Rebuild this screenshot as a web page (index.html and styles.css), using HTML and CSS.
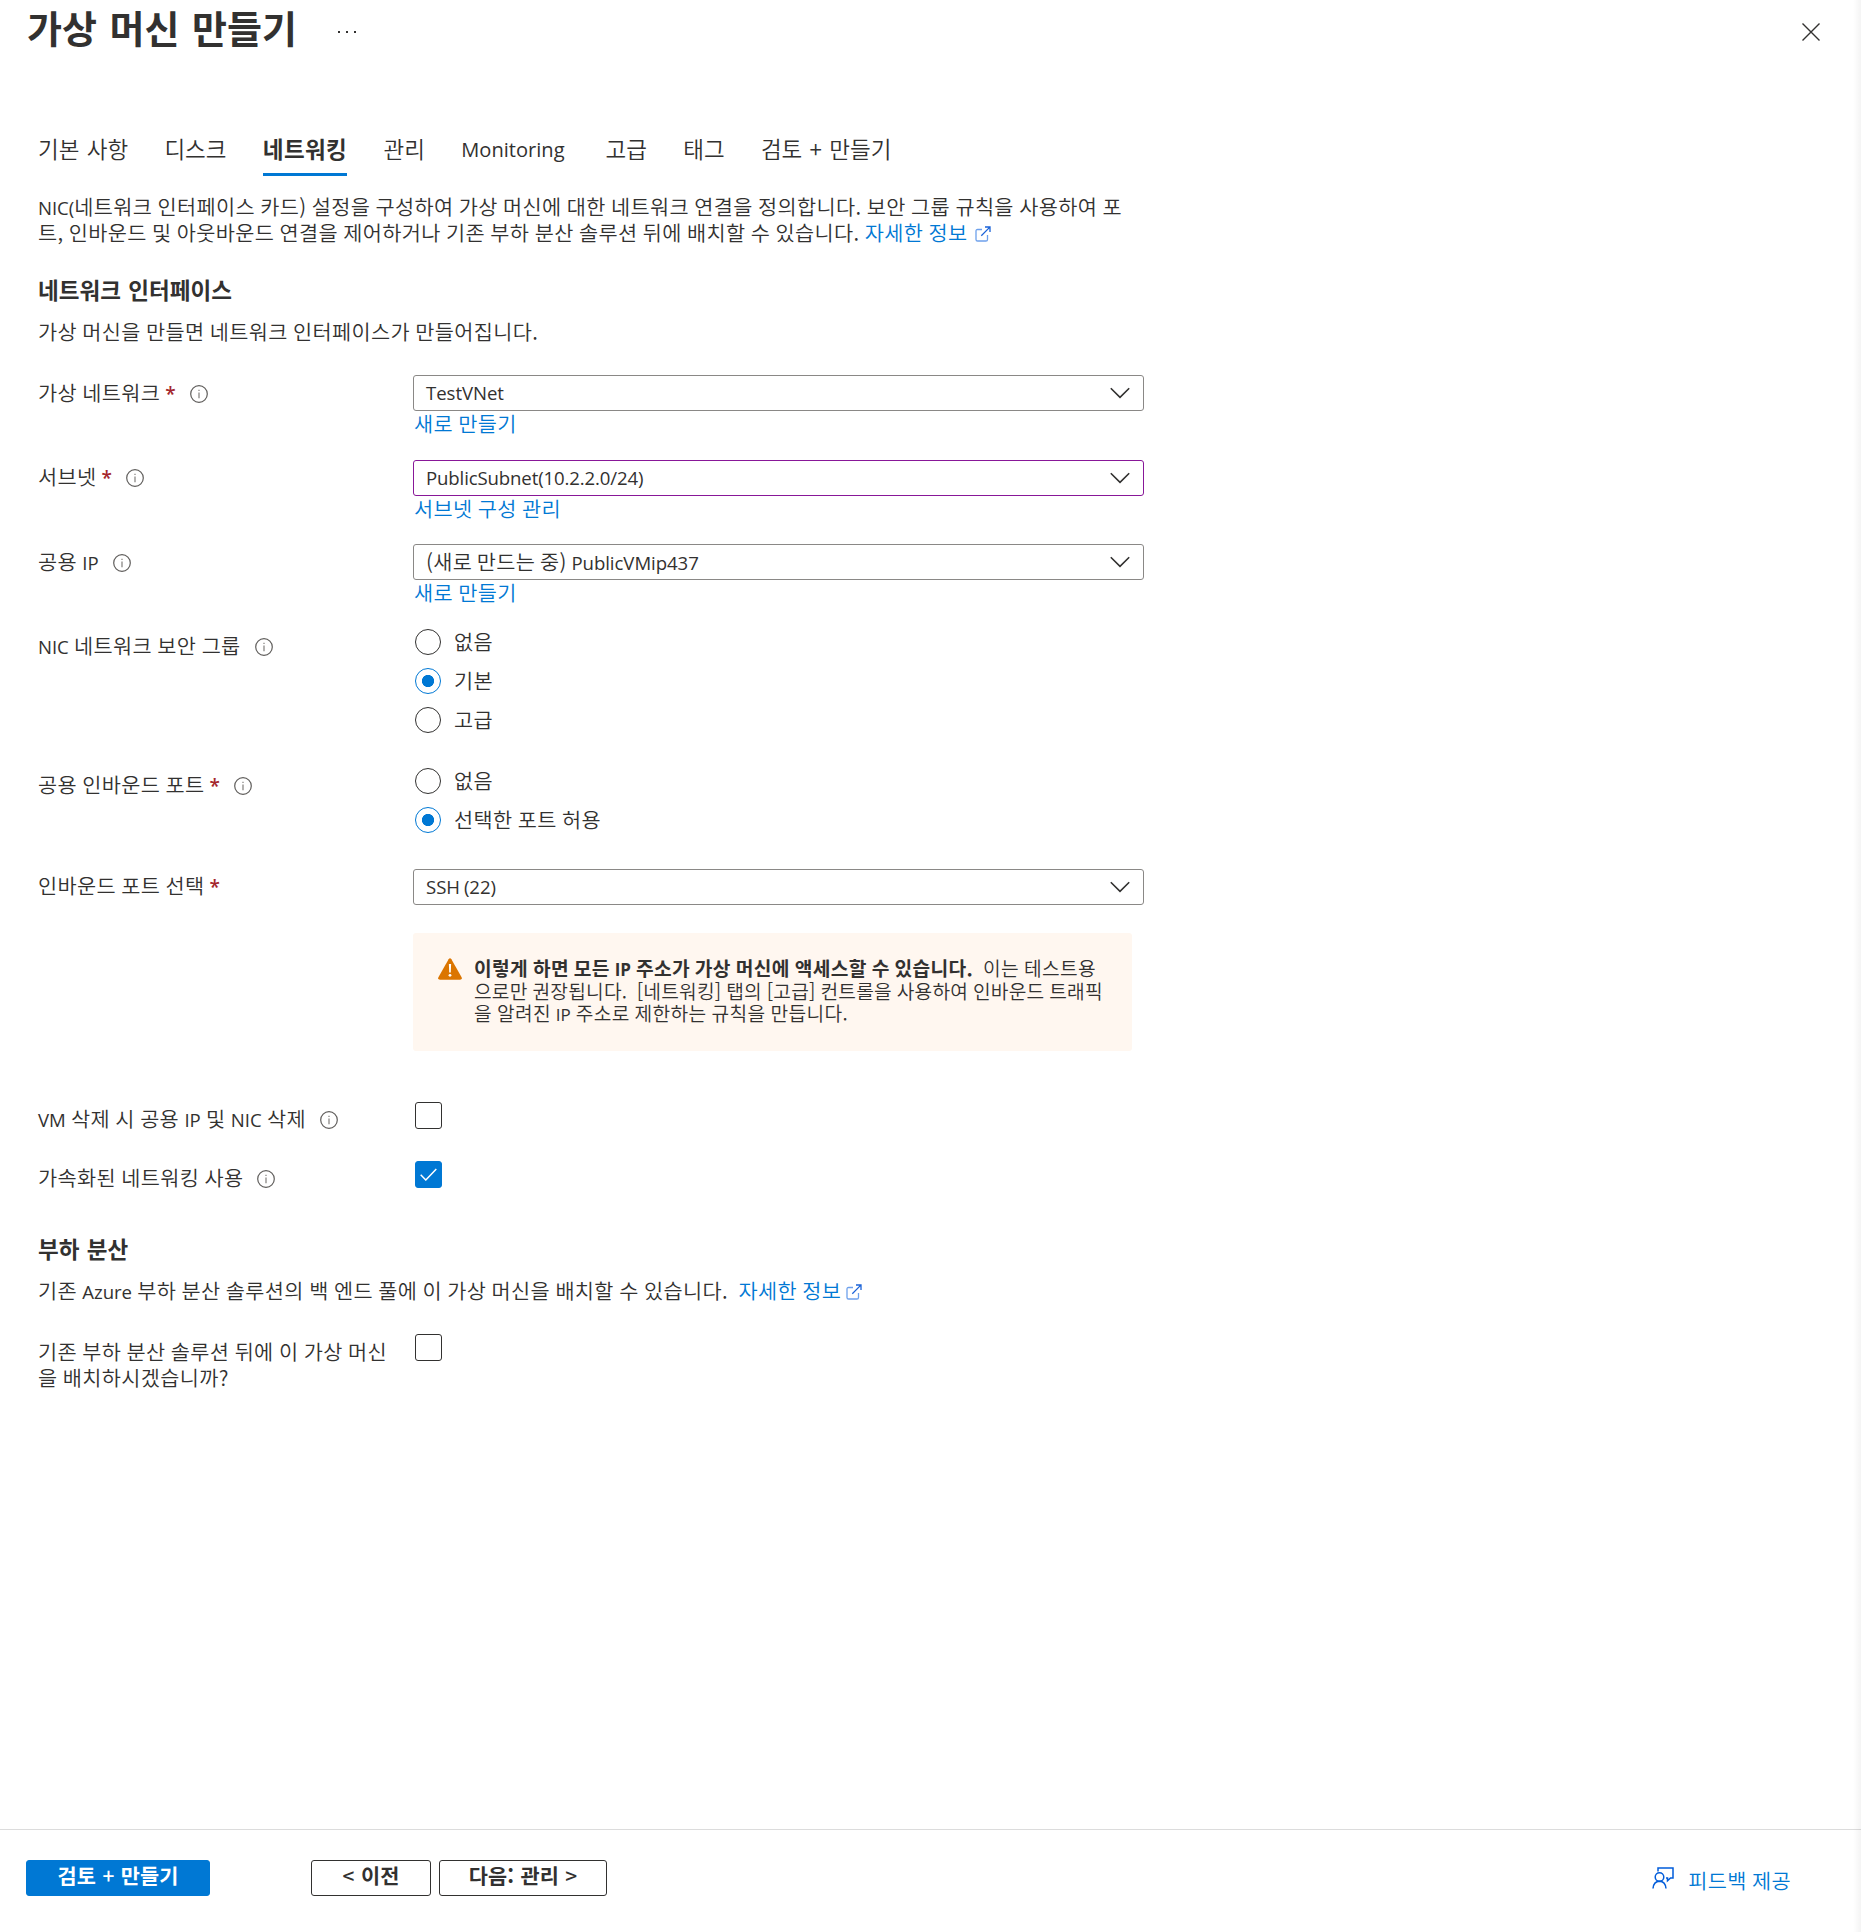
FILE: index.html
```html
<!DOCTYPE html>
<html lang="ko">
<head>
<meta charset="utf-8">
<title>가상 머신 만들기</title>
<link rel="stylesheet" href="styles.css">
</head>
<body>
<svg class="defs" aria-hidden="true">
  <symbol id="info" viewBox="0 0 18 18"><circle cx="9" cy="9" r="8.3" fill="none" stroke="#605e5c" stroke-width="1.2"/><path d="M9 7.4V13.2M9 4.7V6.1" stroke="#8a8886" stroke-width="1.3"/></symbol>
  <symbol id="chevron" viewBox="0 0 20 12"><path d="M.8 1.2 10 10.4 19.2 1.2" fill="none" stroke="#323130" stroke-width="1.6"/></symbol>
  <symbol id="external" viewBox="0 0 16 16"><path d="M7 3.5H2.6Q1 3.5 1 5.1V13.4Q1 15 2.6 15H10.9Q12.5 15 12.5 13.4V9" fill="none" stroke="#6da0ec" stroke-width="1.3"/><path d="M6.3 9.7 14.6 1.4M10 1H15V6" fill="none" stroke="#1b63d8" stroke-width="1.3"/></symbol>
</svg>
<div class="blade">
  <header class="header">
    <h1 class="title">가상 머신 만들기</h1>
    <span class="more"><i></i><i></i><i></i></span>
    <svg class="close" viewBox="0 0 18 18"><path d="M.5.5 17.5 17.5M17.5.5.5 17.5" stroke="#323130" stroke-width="1.4"/></svg>
  </header>

  <main class="content">
    <nav class="tabs">
      <a class="tab">기본 사항</a>
      <a class="tab">디스크</a>
      <a class="tab active">네트워킹</a>
      <a class="tab">관리</a>
      <a class="tab latin-tab">Monitoring</a>
      <a class="tab">고급</a>
      <a class="tab">태그</a>
      <a class="tab">검토 + 만들기</a>
    </nav>

    <p class="text intro"><span class="lat">NIC(</span>네트워크 인터페이스 카드) 설정을 구성하여 가상 머신에 대한 네트워크 연결을 정의합니다. 보안 그룹 규칙을 사용하여 포<br>트, 인바운드 및 아웃바운드 연결을 제어하거나 기존 부하 분산 솔루션 뒤에 배치할 수 있습니다. <a class="link">자세한 정보</a><svg class="ext"><use href="#external"/></svg></p>

    <h2 class="section">네트워크 인터페이스</h2>
    <p class="text section-text">가상 머신을 만들면 네트워크 인터페이스가 만들어집니다.</p>

    <div class="row vnet">
      <div class="label">가상 네트워크<b class="req">*</b><svg class="info"><use href="#info"/></svg></div>
      <div class="field"><div class="select"><span class="lat">TestVNet</span><svg class="chev"><use href="#chevron"/></svg></div><a class="link under">새로 만들기</a></div>
    </div>
    <div class="row subnet">
      <div class="label">서브넷<b class="req">*</b><svg class="info"><use href="#info"/></svg></div>
      <div class="field"><div class="select changed"><span class="lat">PublicSubnet(10.2.2.0/24)</span><svg class="chev"><use href="#chevron"/></svg></div><a class="link under">서브넷 구성 관리</a></div>
    </div>
    <div class="row pip">
      <div class="label"><span>공용 <span class="lat">IP</span></span><svg class="info"><use href="#info"/></svg></div>
      <div class="field"><div class="select mixed"><span>(새로 만드는 중) <span class="lat">PublicVMip437</span></span><svg class="chev"><use href="#chevron"/></svg></div><a class="link under">새로 만들기</a></div>
    </div>
    <div class="row nsg">
      <div class="label"><span><span class="lat">NIC</span> 네트워크 보안 그룹</span><svg class="info"><use href="#info"/></svg></div>
      <div class="radios">
        <div class="radio"><i class="dot"></i>없음</div>
        <div class="radio"><i class="dot on"></i>기본</div>
        <div class="radio"><i class="dot"></i>고급</div>
      </div>
    </div>
    <div class="row inbound">
      <div class="label">공용 인바운드 포트<b class="req">*</b><svg class="info"><use href="#info"/></svg></div>
      <div class="radios">
        <div class="radio"><i class="dot"></i>없음</div>
        <div class="radio"><i class="dot on"></i>선택한 포트 허용</div>
      </div>
    </div>
    <div class="row ports">
      <div class="label">인바운드 포트 선택<b class="req">*</b></div>
      <div class="field"><div class="select"><span class="lat">SSH (22)</span><svg class="chev"><use href="#chevron"/></svg></div></div>
    </div>

    <div class="warning">
      <svg class="warn-icon" viewBox="0 0 24 22"><path d="M10.6 1.2Q12-.8 13.4 1.2L23.6 19.2Q24.4 21.6 22 21.8H2Q-.4 21.6.4 19.2Z" fill="#db7500"/><path d="M10.9 6H13.1L12.8 14.4H11.2Z" fill="#fff"/><circle cx="12" cy="17.3" r="1.4" fill="#fff"/></svg>
      <p class="warn-text"><b>이렇게 하면 모든 <span class="lat">IP</span> 주소가 가상 머신에 액세스할 수 있습니다.</b>&nbsp; 이는 테스트용<br><span class="tight">으로만 권장됩니다.&nbsp; [네트워킹] 탭의 [고급] 컨트롤을 사용하여 인바운드 트래픽</span><br>을 알려진 <span class="lat">IP</span> 주소로 제한하는 규칙을 만듭니다.</p>
    </div>

    <div class="row del">
      <div class="label"><span><span class="lat">VM</span> 삭제 시 공용 <span class="lat">IP</span> 및 <span class="lat">NIC</span> 삭제</span><svg class="info"><use href="#info"/></svg></div>
      <span class="check"></span>
    </div>
    <div class="row accel">
      <div class="label">가속화된 네트워킹 사용<svg class="info"><use href="#info"/></svg></div>
      <span class="check on"><svg viewBox="0 0 17 13"><path d="M.7 6.8 5.8 12 16.3 1" fill="none" stroke="#fff" stroke-width="1.5"/></svg></span>
    </div>

    <h2 class="section lb">부하 분산</h2>
    <p class="text section-text">기존 <span class="lat">Azure</span> 부하 분산 솔루션의 백 엔드 풀에 이 가상 머신을 배치할 수 있습니다.&nbsp; <a class="link">자세한 정보</a><svg class="ext near"><use href="#external"/></svg></p>
    <div class="row behind">
      <div class="label wrap"><span>기존 부하 분산 솔루션 뒤에 이 가상 머신<br>을 배치하시겠습니까?</span></div>
      <span class="check"></span>
    </div>
  </main>

  <footer class="footer">
    <a class="btn primary">검토 <span class="sign">+</span> 만들기</a>
    <a class="btn prev"><span class="sign">&lt;</span> 이전</a>
    <a class="btn next">다음: 관리 <span class="sign">&gt;</span></a>
    <a class="link feedback"><svg viewBox="0 0 22 22"><path d="M6 4.5V1H21V11H18.5L15.5 13.8V11H14" fill="none" stroke="#015cda" stroke-width="1.5"/><circle cx="7.5" cy="10" r="4.3" fill="none" stroke="#015cda" stroke-width="1.5"/><path d="M1 21.5Q1.6 14.5 7.5 14.3Q13.4 14.5 14 21.5" fill="none" stroke="#015cda" stroke-width="1.5"/></svg>피드백 제공</a>
  </footer>
</div>
</body>
</html>
```
FILE: styles.css
```css
* { box-sizing: border-box; }

body {
  margin: 0;
  color: #323130;
  background: #fff;
  font: 20.8px/26px "Noto Sans CJK KR", "Noto Sans", sans-serif;
  font-weight: 350;
  letter-spacing: .35px;
  word-spacing: -.85px;
}

h1, h2, p { margin: 0; }

.defs { position: absolute; width: 0; height: 0; }

.blade {
  display: flex;
  flex-direction: column;
  position: relative;
  width: 1861px;
  height: 1932px;
}

/* soft edge of the neighbouring pane */
.blade::after {
  content: "";
  position: absolute;
  top: 0;
  right: 0;
  bottom: 0;
  width: 8px;
  background: linear-gradient(to right, transparent, rgba(0, 0, 0, .045));
}

.lat {
  font-family: "Open Sans", "Noto Sans", sans-serif;
  font-size: 18.6px;
  font-weight: 400;
  line-height: 1;
  letter-spacing: -.05px;
}

/* header */
.header {
  display: flex;
  align-items: center;
  height: 64px;
  padding: 0 41px 0 27px;
}

.title {
  margin-bottom: 10px;
  font-size: 38px;
  line-height: 54px;
  font-weight: 700;
  letter-spacing: 0;
  word-spacing: 2px;
  white-space: nowrap;
}

.more { display: flex; gap: 6px; margin-left: 41px; }
.more i { width: 2px; height: 2px; background: #323130; }
.close { width: 18px; height: 18px; margin-left: auto; }

/* tabs */
.content { flex: 1; padding: 0 38px; }

.tabs { display: flex; gap: 36.3px; height: 112px; padding-top: 68px; }

.tab {
  height: 44px;
  font-size: 22.5px;
  line-height: 32px;
  letter-spacing: 0;
  word-spacing: 1px;
  white-space: nowrap;
}

.tab.active { font-weight: 700; letter-spacing: .4px; border-bottom: 3px solid #0078d4; }

.latin-tab {
  width: 108px;
  font: 400 20.1px/36px "Open Sans", "Noto Sans", sans-serif;
}

.text { white-space: nowrap; }
.intro { padding-top: 17px; }
.link { color: #0078d4; }
.ext { width: 16px; height: 16px; margin-left: 7px; vertical-align: -1px; }
.ext.near { margin-left: 5px; }

.section {
  margin-top: 31px;
  font-size: 22.5px;
  line-height: 26px;
  font-weight: 700;
  letter-spacing: .05px;
  word-spacing: 1px;
}

.section-text { margin-top: 16px; }

/* form */
.row { display: flex; align-items: flex-start; }

.label {
  display: flex;
  align-items: center;
  width: 375px;
  height: 34px;
  white-space: nowrap;
}

.req {
  margin: 3px 0 0 5px;
  color: #a4262c;
  font: 600 19px/26px "Open Sans", sans-serif;
}

.info { width: 18px; height: 18px; margin: 3px 0 0 14px; }

.field { width: 731px; }

.select {
  display: flex;
  align-items: center;
  justify-content: space-between;
  height: 36px;
  padding: 0 13px 0 12px;
  border: 1px solid #8a8886;
  border-radius: 3px;
}

.select.changed { border-color: #881798; }
.select.changed .lat { letter-spacing: -.13px; }
.select.mixed > span { margin-bottom: 3px; word-spacing: -1.5px; }
.chev { width: 20px; height: 12px; }
.under { display: block; padding-left: 1px; line-height: 24px; }

.vnet { height: 85px; margin-top: 31px; }
.subnet { height: 84px; }
.pip { height: 84px; }
.nsg { height: 139px; }
.inbound { height: 102px; }
.ports { height: 64px; }

.subnet .label,
.ports .label,
.del .label,
.accel .label { height: 32px; }

.radios { display: flex; flex-direction: column; gap: 13px; padding: 1px 0 0 2px; }
.radio { display: flex; height: 26px; gap: 13px; line-height: 24px; }

.dot {
  width: 26px;
  height: 26px;
  border: 1px solid #323130;
  border-radius: 50%;
}

.dot.on {
  border-color: #0078d4;
  background: radial-gradient(circle, #0078d4 5.7px, #fff 6.5px);
}

.warning {
  display: flex;
  width: 719px;
  height: 118px;
  margin-left: 375px;
  padding: 25px 0 0 25px;
  background: #fff7f0;
  border-radius: 3px;
}

.warn-icon { width: 24px; height: 22px; margin-right: 12px; }

.warn-text {
  margin-top: -1px;
  font-size: 19.2px;
  line-height: 22.5px;
  word-spacing: -.8px;
  white-space: nowrap;
}

.warn-text .lat { font-size: 17px; }
.warn-text b { font-weight: 700; }
.warn-text b .lat { font-weight: 700; }
.warn-text .tight { letter-spacing: .22px; }

.check {
  display: flex;
  align-items: center;
  justify-content: center;
  width: 27px;
  height: 27px;
  margin-left: 2px;
  border: 1px solid #323130;
  border-radius: 3px;
}

.check.on { border-color: #0078d4; background: #0078d4; }
.check svg { width: 17px; height: 13px; }

.del { height: 59px; margin-top: 51px; }
.accel { height: 44px; }
.section.lb { margin-top: 30px; }
.behind { margin-top: 31px; }
.label.wrap { height: 60px; }

/* footer */
.footer {
  display: flex;
  align-items: flex-start;
  height: 103px;
  padding: 30px 70px 0 26px;
  border-top: 1px solid #dcdcdc;
}

.btn {
  height: 36px;
  border: 1px solid #323130;
  border-radius: 3px;
  font-weight: 700;
  line-height: 28px;
  letter-spacing: .1px;
  word-spacing: .5px;
  text-align: center;
}

.btn .sign { font-weight: 500; }
.btn.primary { width: 184px; color: #fff; background: #0078d4; border-color: #0078d4; }
.btn.prev { width: 120px; margin-left: 101px; }
.btn.next { width: 168px; margin-left: 8px; }

.feedback { display: flex; gap: 14px; margin: 7px 0 0 auto; }
.feedback svg { width: 22px; height: 22px; }
```
